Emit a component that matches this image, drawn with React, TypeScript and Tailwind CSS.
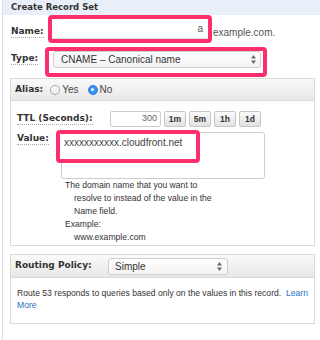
import type { ReactNode } from 'react'

function Label({ children }: { children: ReactNode }) {
  return (
    <span className="inline-block font-['DejaVu_Sans',Verdana,sans-serif] font-bold text-[9px] leading-[11px] text-[#333] border-b border-dotted border-[#aaa]">
      {children}
    </span>
  )
}

function Arrows() {
  return (
    <svg width="5" height="9" viewBox="0 0 5 9">
      <path d="M2.5 0L5 3.6H0z M2.5 9L0 5.4h5z" fill="#666" />
    </svg>
  )
}

function TtlButton({ label }: { label: string }) {
  return (
    <div className="w-[22px] h-[16px] flex items-center justify-center rounded-[2px] border border-[#c6c6c6] bg-gradient-to-b from-[#fbfbfb] to-[#e2e2e2] text-[8.5px] font-bold text-[#333]">
      {label}
    </div>
  )
}

export default function App() {
  return (
    <div className="w-[320px] h-[340px] bg-white overflow-hidden font-['Liberation_Sans',Arial,sans-serif] text-[#333]">
      <div className="ml-[2px] h-full border-l border-[#dedede]">
        {/* header */}
        <div className="h-[15px] bg-[#e9eff9] pl-[8px] font-['DejaVu_Sans',Verdana,sans-serif] font-bold text-[8.5px] leading-[15px] text-[#333]">
          Create Record Set
        </div>

        {/* name */}
        <div className="flex items-start pl-[8px]">
          <div className="w-[37px] pt-[11px] flex">
            <Label>Name:</Label>
          </div>
          <div className="w-[164px] h-[28px] border-4 border-[#fc2f6c] rounded-[4px] bg-white">
            <div className="h-full border-b border-[#dcdcdc] flex items-center justify-end pr-[5px] text-[10px] text-[#555]">
              a
            </div>
          </div>
          <span className="ml-[1px] mt-[12px] text-[10px] leading-[12px] text-[#555]">example.com.</span>
        </div>

        {/* type */}
        <div className="flex items-start pl-[8px] mt-[4px]">
          <div className="w-[34px] pt-[6px] flex">
            <Label>Type:</Label>
          </div>
          <div className="w-[222px] h-[30px] border-4 border-[#fc2f6c] rounded-[4px] bg-white">
            <div className="ml-[4px] mr-[2px] h-[17px] flex items-center justify-between pl-[7px] pr-[4px] border border-[#cfcfcf] rounded-[3px] bg-gradient-to-b from-white to-[#f3f3f3] text-[10px] text-[#333]">
              <span>CNAME – Canonical name</span>
              <Arrows />
            </div>
          </div>
        </div>

        {/* alias panel */}
        <div className="ml-[7px] mt-[1px] w-[305px] border border-[#d9d9d9]">
          <div className="h-[22px] flex items-center pl-[4px] bg-gradient-to-b from-[#fafafa] to-[#e7e7e7] border-b border-[#dadada] text-[10px]">
            <span className="font-['DejaVu_Sans',Verdana,sans-serif] font-bold text-[9px] text-[#333]">Alias:</span>
            <span className="ml-[7px] w-[10px] h-[10px] rounded-full border border-[#a9a9a9] bg-gradient-to-b from-white to-[#e9e9e9]" />
            <span className="ml-[2px] text-[#444]">Yes</span>
            <span className="ml-[9px] w-[10px] h-[10px] rounded-full bg-[#3b8ff0] border border-[#2b7fe0] flex items-center justify-center">
              <span className="w-[3px] h-[3px] rounded-full bg-white" />
            </span>
            <span className="ml-[2px] text-[#444]">No</span>
          </div>

          <div className="pt-[10px] pl-[6px] pb-[1px]">
            {/* ttl */}
            <div className="flex items-center h-[16px]">
              <div className="w-[93px] flex">
                <Label>TTL (Seconds):</Label>
              </div>
              <div className="w-[51px] h-[16px] flex items-center justify-end pr-[3px] border border-[#cdcdcd] rounded-[2px] text-[9px] text-[#666]">
                300
              </div>
              <div className="ml-[3px] flex gap-[3px]">
                <TtlButton label="1m" />
                <TtlButton label="5m" />
                <TtlButton label="1h" />
                <TtlButton label="1d" />
              </div>
            </div>

            {/* value */}
            <div className="flex items-start mt-[5px]">
              <div className="w-[44px] pt-[1px] flex">
                <Label>Value:</Label>
              </div>
              <div className="relative w-[204px] h-[47px] border border-[#cdcdcd] rounded-[3px] bg-white">
                <div className="absolute left-[-6px] top-[-3px] w-[144px] h-[33px] border-4 border-[#fc2f6c] rounded-[4px] bg-white pl-[4px] pt-[3px] text-[10px] leading-[12px] text-[#444]">
                  xxxxxxxxxxx.cloudfront.net
                </div>
              </div>
            </div>

            {/* help */}
            <div className="pl-[48px] text-[8.6px] leading-[13px] text-[#333]">
              <div>The domain name that you want to</div>
              <div className="pl-[9px]">resolve to instead of the value in the</div>
              <div className="pl-[9px]">Name field.</div>
              <div>Example:</div>
              <div className="pl-[9px]">www.example.com</div>
            </div>
          </div>
        </div>

        {/* routing policy */}
        <div className="ml-[7px] mt-[8px] w-[305px] border border-[#d9d9d9]">
          <div className="h-[23px] flex items-center pl-[4px] bg-gradient-to-b from-[#fafafa] to-[#e7e7e7] border-b border-[#dadada]">
            <span className="w-[93px] font-['DejaVu_Sans',Verdana,sans-serif] font-bold text-[9px] text-[#333]">Routing Policy:</span>
            <div className="w-[120px] h-[17px] flex items-center justify-between pl-[6px] pr-[5px] border border-[#cfcfcf] rounded-[3px] bg-gradient-to-b from-white to-[#f3f3f3] text-[10px] text-[#333]">
              <span>Simple</span>
              <Arrows />
            </div>
          </div>
          <div className="pt-[9px] pb-[12px] pl-[6px] text-[8.6px] leading-[12px] text-[#333]">
            <div className="whitespace-nowrap">
              Route 53 responds to queries based only on the values in this record.&nbsp; <span className="text-[#1f6fc5]">Learn</span>
            </div>
            <div className="text-[#1f6fc5]">More</div>
          </div>
        </div>
      </div>
    </div>
  )
}
